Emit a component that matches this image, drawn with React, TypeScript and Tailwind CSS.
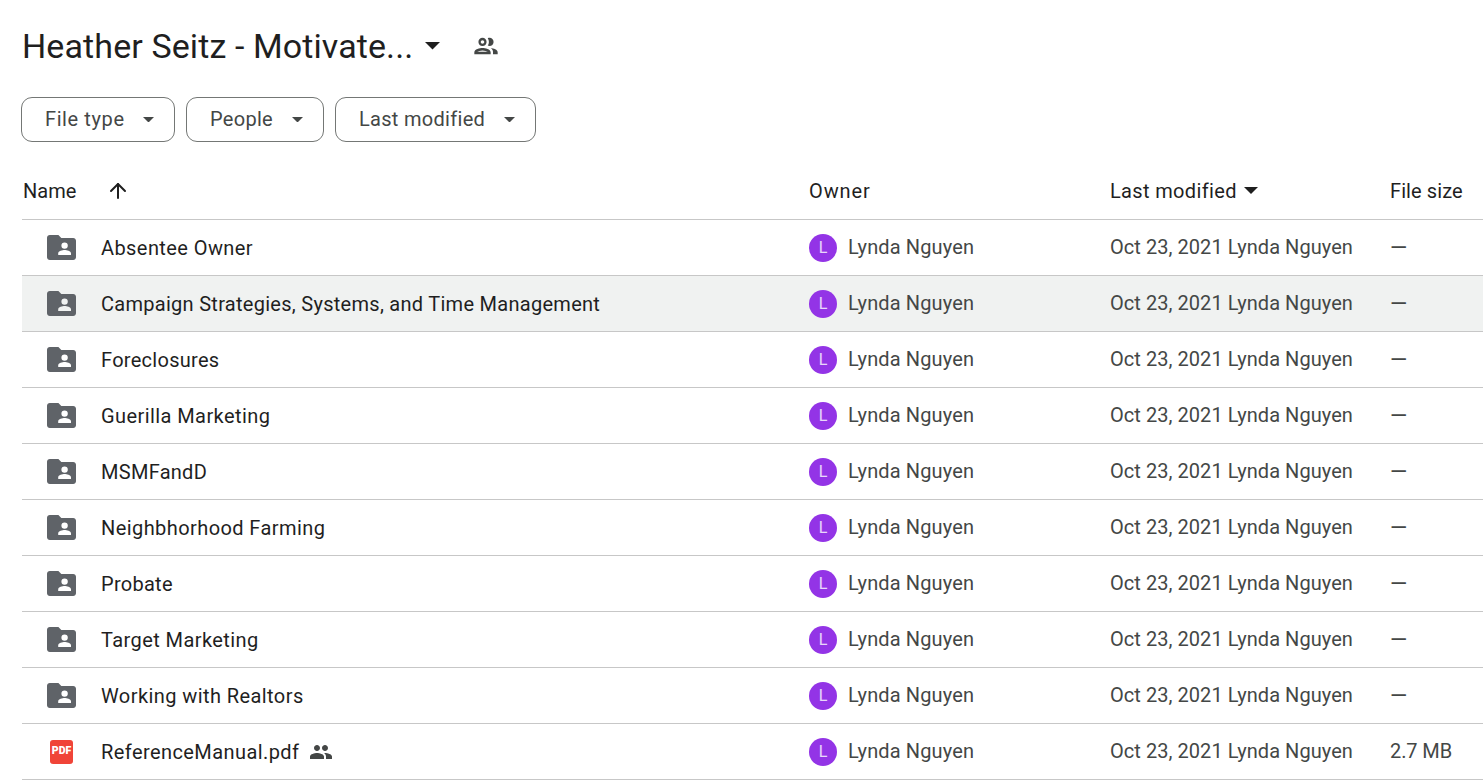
import { ArrowUp } from "lucide-react";

const rows = [
  { name: "Absentee Owner", wide: true },
  { name: "Campaign Strategies, Systems, and Time Management", active: true },
  { name: "Foreclosures" },
  { name: "Guerilla Marketing", wide: true },
  { name: "MSMFandD" },
  { name: "Neighbhorhood Farming", wide: true },
  { name: "Probate" },
  { name: "Target Marketing", wide: true },
  { name: "Working with Realtors", wide: true },
  { name: "ReferenceManual.pdf", wide: true, pdf: true, size: "2.7 MB" },
];

function Caret({ className }: { className: string }) {
  return (
    <svg viewBox="0 0 10 5" className={className} fill="currentColor">
      <path d="M0 0l5 5 5-5z" />
    </svg>
  );
}

function SharedFolder() {
  return (
    <svg viewBox="0 0 29 25" className="w-[29px] h-[25px] text-[#5f6368]" fill="currentColor">
      <path
        fillRule="evenodd"
        d="M2.8 0h8.6l2.9 3h11.9c1.5 0 2.8 1.2 2.8 2.8v16.4c0 1.5-1.3 2.8-2.8 2.8H2.8C1.3 25 0 23.7 0 22.2V2.8C0 1.2 1.3 0 2.8 0zM17.6 7.4a3.2 3.2 0 1 0 0 6.4 3.2 3.2 0 0 0 0-6.4zM11.2 19.9h12.8v-1.6c0-2.1-4.3-3.2-6.4-3.2s-6.4 1.1-6.4 3.2z"
      />
    </svg>
  );
}

function PdfIcon() {
  return (
    <div className="w-[23px] h-[24px] rounded-[3px] bg-[#f04438] flex items-center justify-center">
      <span className="text-[10.5px] leading-none font-black text-white">PDF</span>
    </div>
  );
}

function PeopleSmall() {
  return (
    <svg viewBox="0 0 24 24" className="w-[24px] h-[24px] text-[#444746]" fill="currentColor">
      <path d="M16 11c1.66 0 2.99-1.34 2.99-3S17.66 5 16 5s-3 1.34-3 3 1.34 3 3 3zm-8 0c1.66 0 2.99-1.34 2.99-3S9.66 5 8 5 5 6.34 5 8s1.34 3 3 3zm0 2c-2.33 0-7 1.17-7 3.5V19h14v-2.5C15 14.17 10.33 13 8 13zm8 0c-.29 0-.62.02-.97.05 1.16.84 1.97 1.97 1.97 3.45V19h6v-2.5c0-2.33-4.67-3.5-7-3.5z" />
    </svg>
  );
}

function PeopleOutline() {
  return (
    <svg viewBox="0 0 24 24" className="w-[28px] h-[28px] text-[#444746]" fill="currentColor">
      <path d="M9 13.75c-2.34 0-7 1.17-7 3.5V19h14v-1.75c0-2.33-4.66-3.5-7-3.5zM4.34 17c.84-.58 2.87-1.25 4.66-1.25s3.82.67 4.66 1.25H4.34zM9 12c1.93 0 3.5-1.57 3.5-3.5S10.93 5 9 5 5.5 6.57 5.5 8.5 7.07 12 9 12zm0-5c.83 0 1.5.67 1.5 1.5S9.83 10 9 10s-1.5-.67-1.5-1.5S8.17 7 9 7zm7.04 6.81c1.16.84 1.96 1.96 1.96 3.44V19h4v-1.75c0-2.02-3.5-3.17-5.96-3.44zM15 12c1.93 0 3.5-1.57 3.5-3.5S16.93 5 15 5c-.54 0-1.04.13-1.5.35.63.89 1 1.98 1 3.15s-.37 2.26-1 3.15c.46.22.96.35 1.5.35z" />
    </svg>
  );
}

function Chip({ label, width, tracking }: { label: string; width: string; tracking: string }) {
  return (
    <button className={`h-[45px] ${width} flex items-center justify-between pl-[23px] pr-[20px] rounded-[11px] border border-[#747775] text-[#444746] text-[20px]`}>
      <span className={`-mt-[2px] ${tracking}`}>{label}</span>
      <Caret className="w-[11px] h-[5.5px]" />
    </button>
  );
}

export default function App() {
  return (
    <div className="h-[783px] overflow-hidden bg-white pl-[22px] text-[#1f1f1f] font-['Roboto',sans-serif]">
      <div className="h-[97px] flex items-center pb-[5px]">
        <h1 className="text-[34px] leading-none w-[403px] tracking-[0.1px] whitespace-nowrap">Heather Seitz - Motivate...</h1>
        <Caret className="w-[15px] h-[7.5px] text-[#1f1f1f]" />
        <span className="ml-[32px] flex"><PeopleOutline /></span>
      </div>

      <div className="flex gap-[11px] -ml-[1px]">
        <Chip label="File type" width="w-[154px]" tracking="tracking-[0.6px]" />
        <Chip label="People" width="w-[138px]" tracking="tracking-[0.3px]" />
        <Chip label="Last modified" width="w-[201px]" tracking="tracking-[0.3px]" />
      </div>

      <div className="mt-[23px] h-[55px] grid grid-cols-[787px_301px_280px_1fr] items-center border-b border-[#c7c7c7] text-[20px] pb-[3px]">
        <div className="flex items-center">
          <span className="w-[84px] pl-[1px]">Name</span>
          <ArrowUp className="w-[24px] h-[24px]" strokeWidth={2} />
        </div>
        <span className="tracking-[0.9px]">Owner</span>
        <div className="flex items-center gap-[7px] tracking-[0.35px]">
          Last modified
          <Caret className="w-[14px] h-[7px]" />
        </div>
        <span className="tracking-[0.1px]">File size</span>
      </div>

      {rows.map((r) => (
        <div
          key={r.name}
          className={`h-[56px] grid grid-cols-[787px_301px_280px_1fr] items-center border-b border-[#c7c7c7] text-[20px] ${r.active ? "bg-[#f0f2f1]" : ""}`}
        >
          <div className="flex items-center">
            <div className="w-[79px] flex justify-center">
              {r.pdf ? <PdfIcon /> : <SharedFolder />}
            </div>
            <span className={`pt-[1px] ${r.wide ? "tracking-[0.42px]" : "tracking-[0.28px]"}`}>{r.name}</span>
            {r.pdf && <span className="ml-[10px] flex"><PeopleSmall /></span>}
          </div>
          <div className="flex items-center gap-[12px] text-[#444746] tracking-[0.12px]">
            <div className="w-[28px] h-[28px] rounded-full bg-[#9334e6] text-white/80 text-[16px] flex items-center justify-center">L</div>
            <span className="pb-[2px] -ml-[1px]">Lynda Nguyen</span>
          </div>
          <span className="text-[#444746] whitespace-nowrap tracking-[0.05px] pb-[2px]">Oct 23, 2021 Lynda Nguyen</span>
          {r.size ? (
            <span className="text-[#444746] pb-[2px] -tracking-[0.1px]">{r.size}</span>
          ) : (
            <span className="text-[#444746] text-[22px] leading-none">—</span>
          )}
        </div>
      ))}
    </div>
  );
}
